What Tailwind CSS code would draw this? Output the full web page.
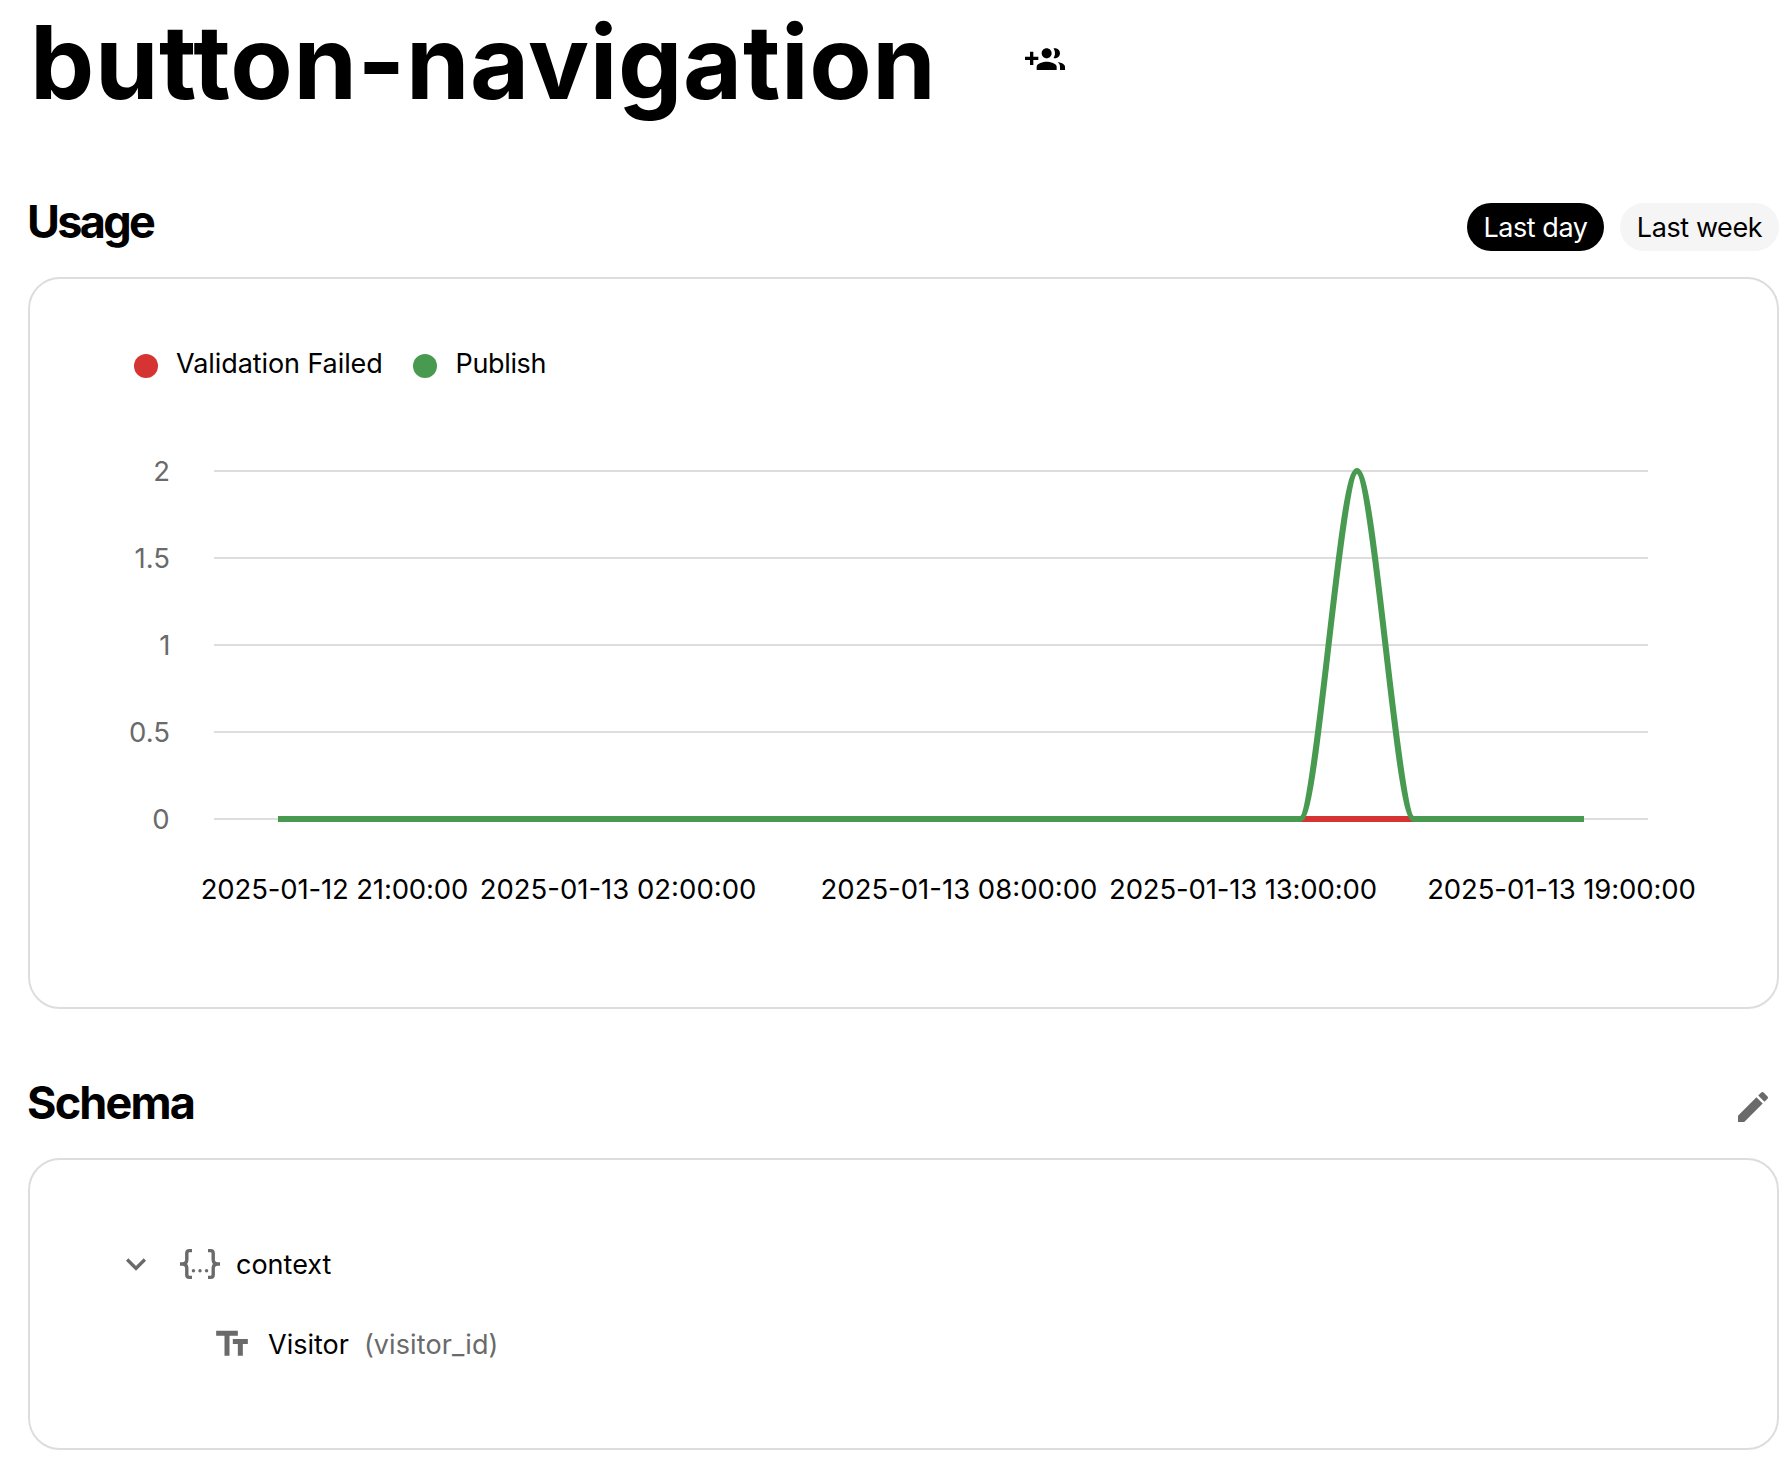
<!DOCTYPE html>
<html lang="en">
<head>
<meta charset="utf-8">
<title>button-navigation</title>
<script src="https://cdn.jsdelivr.net/npm/@tailwindcss/browser@4"></script>
</head>
<body class="bg-white text-black font-[Inter,sans-serif] text-[27px] h-[1470px] overflow-hidden">
<main class="flex flex-col pl-[28px] pr-[13px]">
  <header class="flex h-[191px] items-start">
    <h1 class="w-[997px] pl-[2px] pt-[3px] text-[102px] leading-[118px] font-bold tracking-[0.6px] whitespace-nowrap">button-navigation</h1>
    <svg class="mt-[40px] h-[40px] w-[40px] shrink-0" viewBox="0 0 24 24" fill="currentColor"><path d="M8 10H5V7H3v3H0v2h3v3h2v-3h3v-2zm10 1c1.66 0 2.99-1.34 2.99-3S19.66 5 18 5c-.32 0-.63.05-.91.14.57.81.9 1.79.9 2.86s-.34 2.04-.9 2.86c.28.09.59.14.91.14zm-5 0c1.66 0 2.99-1.34 2.99-3S14.66 5 13 5c-1.66 0-3 1.34-3 3s1.34 3 3 3zm6.62 2.16c.83.73 1.38 1.66 1.38 2.84v2h3v-2c0-1.54-2.37-2.49-4.38-2.84zM13 13c-2 0-6 1-6 3v2h12v-2c0-2-4-3-6-3z"/></svg>
  </header>

  <section>
    <div class="flex h-[60px] items-end justify-between">
      <h2 class="-ml-px text-[45px] leading-[58px] font-bold tracking-[-2.7px]">Usage</h2>
      <div class="flex gap-4 leading-[48px] font-[420]">
        <button class="h-12 w-[137px] rounded-full bg-black pt-px tracking-[-0.45px] text-white">Last day</button>
        <button class="h-12 w-[159px] rounded-full bg-[#f5f5f5] pt-px tracking-[-0.4px]">Last week</button>
      </div>
    </div>
    <div class="mt-[26px] h-[732px] rounded-[32px] border-2 border-[#ddd] pt-[60px]">
      <div class="flex h-12 items-center pl-[104px] leading-[48px] font-[420]">
        <span class="mt-[6px] mr-[18px] size-6 rounded-full bg-[#d63333]"></span>
        <span class="mt-[2px] w-[237px] tracking-[-0.08px]">Validation Failed</span>
        <span class="mt-[6px] mr-[18.5px] size-6 rounded-full bg-[#489a50]"></span>
        <span class="mt-[2px] tracking-[-0.35px]">Publish</span>
      </div>
      <svg class="block h-[620px] w-[1747px]" viewBox="30 387 1747 620" font-size="27.5">
        <path d="M214 471H1648M214 558H1648M214 645H1648M214 732H1648M214 819H1648" stroke="#ddd" stroke-width="2"/>
        <g fill="#6a6a6a" text-anchor="end">
          <text x="170" y="481">2</text>
          <text x="170" y="568">1.5</text>
          <text x="170.5" y="655">1</text>
          <text x="170" y="742">0.5</text>
          <text x="169.5" y="829">0</text>
        </g>
        <path d="M278 819H1584" stroke="#d63333" stroke-width="6"/>
        <path d="M278 819H1300.3C1317 819 1340 471 1357 471S1397 819 1413.7 819H1584" fill="none" stroke="#489a50" stroke-width="6"/>
        <g text-anchor="middle">
          <text class="tracking-[-0.15px]" x="334.5" y="899">2025-01-12 21:00:00</text>
          <text x="618" y="899">2025-01-13 02:00:00</text>
          <text x="959" y="899">2025-01-13 08:00:00</text>
          <text class="tracking-[-0.15px]" x="1243" y="899">2025-01-13 13:00:00</text>
          <text class="tracking-[-0.12px]" x="1561.5" y="899">2025-01-13 19:00:00</text>
        </g>
      </svg>
    </div>
  </section>

  <section class="mt-[63px]">
    <div class="flex h-[60px] items-start justify-between">
      <h2 class="-ml-px text-[45px] leading-[62px] font-bold tracking-[-1.8px]">Schema</h2>
      <svg class="mt-[15px] mr-[6px] size-[40px]" viewBox="0 0 24 24" fill="#6a6a6a"><path d="M3 17.25V21h3.75L17.81 9.94l-3.75-3.75L3 17.25zM20.71 7.04c.39-.39.39-1.02 0-1.41l-2.34-2.34a.9959.9959 0 0 0-1.41 0l-1.83 1.83 3.75 3.75 1.83-1.83z"/></svg>
    </div>
    <div class="mt-[26px] h-[292px] rounded-[32px] border-2 border-[#ddd] py-[64px] font-[420]">
      <div class="flex h-20 items-center pl-[86px]">
        <svg class="size-[40px]" viewBox="0 0 24 24" fill="#6a6a6a"><path d="M16.59 8.59 12 13.17 7.41 8.59 6 10l6 6 6-6z"/></svg>
        <svg class="mr-4 ml-6 size-[40px]" viewBox="0 0 40 40">
          <path d="M12 6.6H9.4Q6.8 6.6 6.8 9.2V15.5Q6.8 20 2.5 20H0M2.5 20Q6.8 20 6.8 24.5V30.8Q6.8 33.4 9.4 33.4H12M28 6.6H30.6Q33.2 6.6 33.2 9.2V15.5Q33.2 20 37.5 20H40M37.5 20Q33.2 20 33.2 24.5V30.8Q33.2 33.4 30.6 33.4H28" fill="none" stroke="#6a6a6a" stroke-width="3.4"/>
          <g fill="#6a6a6a"><circle cx="13.4" cy="26.7" r="1.7"/><circle cx="20" cy="26.7" r="1.7"/><circle cx="26.6" cy="26.7" r="1.7"/></g>
        </svg>
        <span class="mt-[2px]">context</span>
      </div>
      <div class="flex h-20 items-center pl-[182px]">
        <svg class="mr-[16px] size-[40px]" viewBox="0 0 24 24" fill="#6a6a6a"><path d="M2.5 4v3h5v12h3V7h5V4h-13zm19 5h-9v3h3v7h3v-7h3V9z"/></svg>
        <span class="mt-[2px] mr-[15px]">Visitor</span>
        <span class="mt-[2px] font-normal tracking-[0.1px] text-[#6a6a6a]">(visitor_id)</span>
      </div>
    </div>
  </section>
</main>
</body>
</html>
